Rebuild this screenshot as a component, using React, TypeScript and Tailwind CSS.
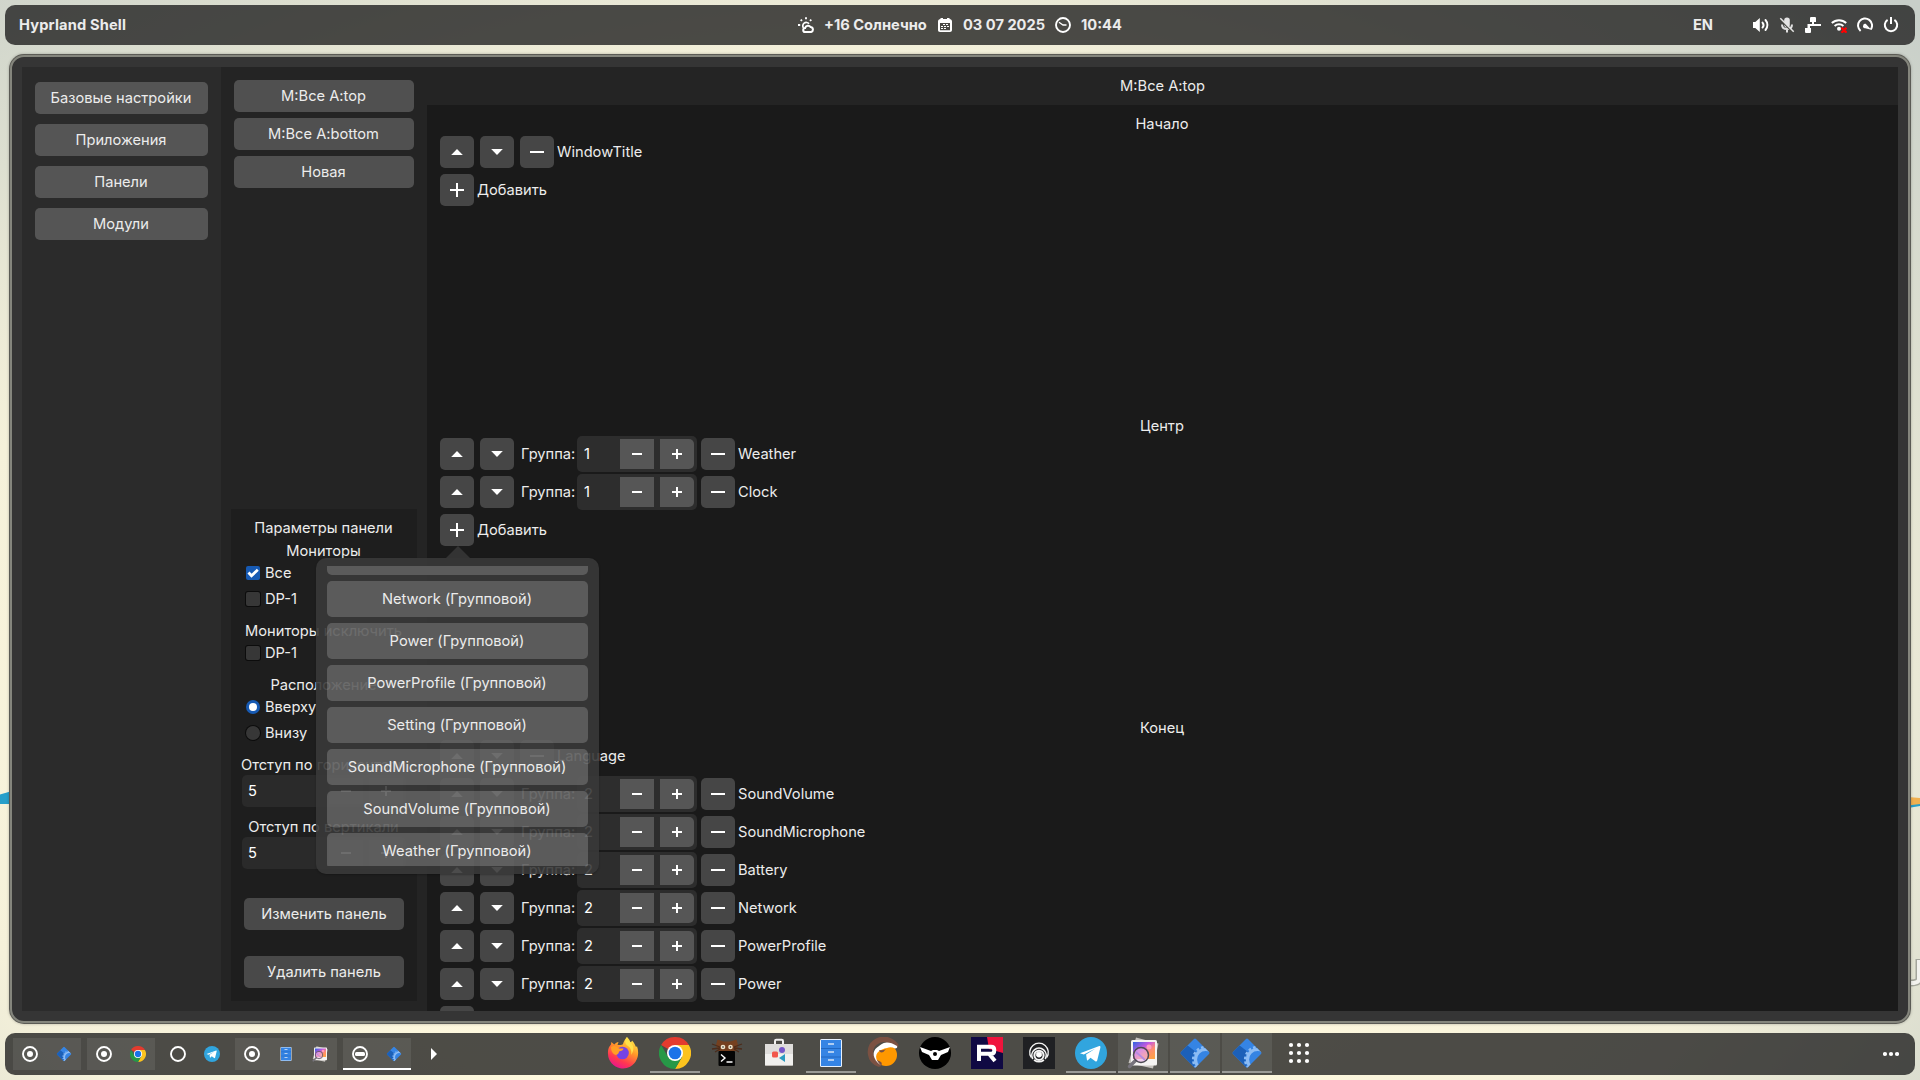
import React from "react";

type Kids = { children?: React.ReactNode };

/* ---------- symbolic icons ---------- */

const Up = () => (
  <svg width="16" height="16" viewBox="0 0 16 16" fill="#fff"><path d="M2.200 11 8 5l5.800 6z" /></svg>
);
const Down = () => (
  <svg width="16" height="16" viewBox="0 0 16 16" fill="#fff"><path d="M2.200 5h11.600L8 11z" /></svg>
);
const Minus = () => (
  <svg width="16" height="16" viewBox="0 0 16 16" fill="#fff"><path d="M1 7h14v2H1z" /></svg>
);
const Plus = () => (
  <svg width="16" height="16" viewBox="0 0 16 16" fill="#fff"><path d="M1 7h6V1h2v6h6v2H9v6H7V9H1z" /></svg>
);
const SmallMinus = () => (
  <svg width="16" height="16" viewBox="0 0 16 16" fill="#fff"><path d="M3 7h10v2H3z" /></svg>
);
const SmallPlus = () => (
  <svg width="16" height="16" viewBox="0 0 16 16" fill="#fff"><path d="M3 7h4V3h2v4h4v2H9v4H7V9H3z" /></svg>
);

const WeatherIcon = () => (
  <svg width="16" height="16" viewBox="0 0 16 16" fill="none" stroke="#fff" strokeWidth="1.500">
    <path d="M8 .2v2M2.700 2.600l1.300 1.300M0 8h2.200M13.300 2.600 12 3.900" strokeWidth="1.900" />
    <path d="M5.500 11A3.300 3.300 0 1 1 11 6.800" strokeWidth="1.700" />
    <path d="M7.300 15a2 2 0 0 1-.2-4 3 3 0 0 1 5.500-.9 2.500 2.500 0 0 1 .5 4.900z" strokeWidth="2" />
  </svg>
);
const CalendarIcon = () => (
  <svg width="16" height="16" viewBox="0 0 16 16">
    <path fill="#fff" fillRule="evenodd" d="M3.500 1H6v1h4V1h2.500v1c1.500 0 2.500 1 2.500 2.400V13c0 1.300-.8 2-2 2H3c-1.300 0-2-.8-2-2V4.400C1 3 2 2 3.500 2zM3 6v7.200h10V6z" />
    <path stroke="#fff" strokeWidth="1" strokeDasharray="2 1" d="M6 7.500h6M4 9.500h8M4 11.500h6" />
  </svg>
);
const ClockIcon = () => (
  <svg width="16" height="16" viewBox="0 0 16 16" fill="none" stroke="#fff">
    <circle cx="8" cy="8" r="7" strokeWidth="1.900" />
    <path d="M4 5.300 8 8h3.500" strokeWidth="1.300" />
  </svg>
);
const VolumeIcon = () => (
  <svg width="16" height="16" viewBox="0 0 16 16" fill="none" stroke="#fff" strokeWidth="1.900" strokeLinecap="round">
    <path d="M0 5h2.300L6.800 1v14l-4.500-4H0z" fill="#fff" stroke="none" />
    <path d="M9.500 5.500a3.800 3.800 0 0 1 0 5M12.500 3a7.500 7.500 0 0 1 0 10" />
  </svg>
);
const MicOffIcon = () => (
  <svg width="16" height="16" viewBox="0 0 16 16" fill="none">
    <rect x="5.200" y=".5" width="5.600" height="10" rx="2.800" fill="#e4e4e4" />
    <path d="M3 7.500c0 3 2.100 4.600 5 4.600s5-1.600 5-4.600M8 12v3.500" stroke="#e0e0e0" strokeWidth="2" />
    <path d="M1 2.500 13.500 15" stroke="#45463f" strokeWidth="1.600" />
    <path d="M1.300 1.300 14.700 14.700" stroke="#e4e4e4" strokeWidth="1.500" />
  </svg>
);
const NetIcon = () => (
  <svg width="16" height="16" viewBox="0 0 16 16" fill="#fff">
    <path d="M5 1.200Q5 0 6 0h4q1 0 1 1.200V5H9v2h7v2H5v2h1v3.700Q6 16 5 16H1q-1 0-1-1.300V11h2.500V7H7V5H5z" />
  </svg>
);
const WifiIcon = () => (
  <svg width="16" height="16" viewBox="0 0 16 16" fill="none" stroke="#fff" strokeWidth="2">
    <path d="M.8 6a10.500 10.500 0 0 1 14.400 0M3.600 8.900a6.500 6.500 0 0 1 8.800 0" />
    <circle cx="8" cy="11.800" r="2" fill="#fff" stroke="none" />
    <path d="m10.500 10.700 5 5m0-5-5 5" stroke="#f00" strokeWidth="2.300" />
  </svg>
);
const GaugeIcon = () => (
  <svg width="16" height="16" viewBox="0 0 16 16" fill="none" stroke="#fff" strokeWidth="2">
    <path d="M3.600 13.900A7 7 0 1 1 13.800 12.500" />
    <path d="M6.200 8.500a1.800 1.800 0 0 1 2.500-1.700l5.500 6-6-1.500a1.900 1.900 0 0 1-2-2.800z" fill="#fff" stroke="none" />
  </svg>
);
const PowerIcon = () => (
  <svg width="16" height="16" viewBox="0 0 16 16" fill="none" stroke="#fff" strokeWidth="2">
    <path d="M4.600 2.800a6.200 6.200 0 1 0 6.800 0M8 0v7" />
  </svg>
);

/* ---------- application icons ---------- */

type IconProps = { s: number };

const Chrome = ({ s }: IconProps) => (
  <svg width={s} height={s} viewBox="0 0 32 32">
    <path fill="#e33b2e" d="M16 16 2.140 8a16 16 0 0 1 27.720 0z" />
    <path fill="#fcc31e" d="M16 8h13.860A16 16 0 0 1 16 32l7-12z" />
    <path fill="#279847" d="M2.140 8A16 16 0 0 0 16 32l6.930-12L16 22l-6.930-2z" />
    <circle cx="16" cy="16" r="8" fill="#fff" />
    <circle cx="16" cy="16" r="6.300" fill="#1a73e8" />
  </svg>
);
const Telegram = ({ s }: IconProps) => (
  <svg width={s} height={s} viewBox="0 0 32 32">
    <circle cx="16" cy="16" r="16" fill="#31a5de" />
    <path fill="#fff" d="M5 16.200 24.300 9q1.300-.3 1.100 1.400L22.200 23.500q-.6 1.500-1.900.7L15.500 20.700l-2.600 2.500q-.8.700-1-.4l-.8-5.200 9.400-6.200-11.700 6z" />
  </svg>
);
const Gear = ({ s }: IconProps) => (
  <svg width={s} height={s} viewBox="0 0 32 32">
    <clipPath id="gearDiamond"><path d="M15 2q1-1 2 0l13 13q1 1 0 2L17 30q-1 1-2 0L2 17q-1-1 0-2z" /></clipPath>
    <g clipPath="url(#gearDiamond)">
      <path fill="#3584e4" d="M0 0h32v32H0z" />
      <path fill="#1c60b8" d="m8 8 9 7-3 5 2 12L0 16z" />
      <circle cx="26.500" cy="22.500" r="10" fill="none" stroke="#8cbcf4" strokeWidth="3.200" />
      <circle cx="26.500" cy="22.500" r="12.300" fill="none" stroke="#8cbcf4" strokeWidth="2.600" strokeDasharray="2.600 2.230" />
    </g>
  </svg>
);
const Files = ({ s }: IconProps) => (
  <svg width={s} height={s} viewBox="0 0 32 32">
    <rect x="5" y="2" width="22" height="28" rx="1.500" fill="#e8f1fc" />
    <path fill="#3584e4" d="M6 3h20v26H6z" />
    <path stroke="#1c60b8" strokeWidth=".8" d="M6 11.500h20M6 20h20" />
    <path stroke="#d6e4f5" strokeWidth="1.600" d="M13 7h6M13 15h6M13 23h6" />
  </svg>
);
const Viewer = ({ s }: IconProps) => (
  <svg width={s} height={s} viewBox="0 0 32 32">
    <defs>
      <linearGradient id="photo" x1="0" y1="0" x2="1" y2="1">
        <stop offset="0" stopColor="#2e63e0" /><stop offset=".4" stopColor="#c45ae0" /><stop offset=".65" stopColor="#ff8d70" /><stop offset="1" stopColor="#ffa53a" />
      </linearGradient>
    </defs>
    <path fill="#c5c2bd" d="m9 .5 22.500 6L26 31.500 1.500 26z" />
    <rect x="4" y="3" width="26" height="25.500" rx="1.500" fill="#f5f4f2" />
    <path fill="url(#photo)" d="M6 5h22v17H6z" />
    <circle cx="22" cy="10" r="2.500" fill="#ff9fbd" />
    <path d="m8.500 23.500-6 6" stroke="#77747c" strokeWidth="3.500" strokeLinecap="round" />
    <circle cx="14" cy="18" r="7.500" fill="#e9b4e6" fillOpacity=".6" stroke="#4c4a52" strokeWidth="1.500" />
    <path d="m9 15 9 8" stroke="#b58be0" strokeWidth="1.800" />
  </svg>
);
const Firefox = () => (
  <svg width="32" height="32" viewBox="0 0 32 32">
    <defs>
      <linearGradient id="fox" x1=".8" y1="0" x2=".3" y2="1">
        <stop offset="0" stopColor="#fff44f" /><stop offset=".4" stopColor="#ff9a28" /><stop offset=".75" stopColor="#ff3750" /><stop offset="1" stopColor="#e8158f" />
      </linearGradient>
    </defs>
    <path fill="url(#fox)" d="M20 0c2 2 3 3.500 3.300 5.300C25 4.500 25 4 25 3.500c2 2 3.200 4.500 4 6.500l1-.7c1.500 4 1.600 9-.2 13A15 15 0 0 1 1 17C.6 12.500 2 9.500 4 7.500L4.300 5l3 2.500c1.300-1.800 2.700-2.300 4.200-2.500L10.500 8c2 0 5 .3 5.500-1 .6-2 2-5 4-7z" />
    <circle cx="15.500" cy="16" r="6.300" fill="#7542e5" />
    <path fill="#ff9f24" d="M4 10c3-1.800 6-.8 8 1.500h4.500c0 1.500-2 2.500-4.500 3 0 2-1.300 3-3 3.500C5 17 4 13 4 10z" />
    <path fill="#ffe04a" d="M20 0c-3 4-2 7 1 9s4 6 3 9c3-4 3-8 1-11s-5-4-5-7z" />
  </svg>
);
const Kitty = () => (
  <svg width="32" height="32" viewBox="0 0 32 32">
    <path fill="#75401f" d="m6.500 2.500 6 2h7l6-2L27 8l-1.500 6H7L5 8z" />
    <path stroke="#4c2c1b" strokeWidth="1.300" d="m1 7 8 3M1 12l8-1M4 15l5-3M31 7l-8 3m8 2-8-1m5 4-5-3" />
    <circle cx="12" cy="10" r="2.300" fill="#f0e6cd" /><circle cx="19.500" cy="10" r="2.300" fill="#f0e6cd" />
    <circle cx="12" cy="10" r=".8" fill="#222" /><circle cx="19.500" cy="10" r=".8" fill="#222" />
    <rect x="7.500" y="14" width="16.500" height="15" rx="1" fill="#050505" />
    <path d="m10 17.500 4 3.500-4 3.500M15.500 25h6" fill="none" stroke="#fff" strokeWidth="1.400" />
  </svg>
);
const Store = () => (
  <svg width="32" height="32" viewBox="0 0 32 32">
    <path d="M12 8V4q0-1.300 1.300-1.300h5.400Q20 2.700 20 4v4" fill="none" stroke="#f1f0ee" strokeWidth="2" />
    <rect x="2" y="7" width="28" height="22" rx="1.500" fill="#f1f0ee" />
    <path d="M2 7h28v10H2z" fill="#dfdddb" />
    <rect x="9" y="14.500" width="6" height="6" rx="1.500" fill="#f2574c" />
    <circle cx="19" cy="13" r="3" fill="#7656c8" />
    <path d="m16 21 6-4v8z" fill="#2b9bc0" />
    <path d="M3 28.500h26" stroke="#bdb9b4" />
  </svg>
);
const Lutris = () => (
  <svg width="32" height="32" viewBox="0 0 32 32">
    <circle cx="19" cy="18" r="11" fill="#ff9800" />
    <path d="M12 27C2 24 1 11 8 5.500S23 2 28.500 8" fill="none" stroke="#7b5142" strokeWidth="5.500" strokeLinecap="round" />
    <path d="M14 28.500C5 22 5 14 10 10.500q4-3 4-3Q20 3 30 9q1 2-2 2.500-4-2-8-.5-2 0-6 2C8 16 7 22 14 28.500z" fill="#fff" />
    <path d="M12 13q4 1 7-1-3 4.500-6 3z" fill="#7b5142" />
  </svg>
);
const Winged = () => (
  <svg width="32" height="32" viewBox="0 0 32 32">
    <circle cx="16" cy="16" r="16" fill="#000" />
    <path fill="#fff" d="m1 10 11 4 2-1h4l2 1 11-4-2 5-7 3-3 5h-6l-3-5-7-3z" />
    <circle cx="16" cy="17" r="2" fill="#000" />
  </svg>
);
const Rustdesk = () => (
  <svg width="32" height="32" viewBox="0 0 32 32">
    <path fill="#100943" d="M0 0h32v32H0z" /><path fill="#f0143c" d="M16 0h16v16l-14-4z" />
    <path fill="none" stroke="#fff" strokeWidth="4" d="M8 24V9.800h12q3.300 0 3.300 3.400 0 3.600-3.300 3.600H10m8 0 6 7.200" />
  </svg>
);
const Rings = () => (
  <svg width="32" height="32" viewBox="0 0 32 32" fill="none" stroke="#f4f4f4">
    <path fill="#1f2023" stroke="none" d="M0 0h32v32H0z" />
    <path d="M8.200 20.500a9.300 9.300 0 1 1 15.600 0" strokeWidth="1.300" />
    <path d="M9.800 22a7.200 7.200 0 1 1 12.400 0" strokeWidth="1.600" />
    <circle cx="16" cy="18.300" r="4.600" strokeWidth="2" />
    <circle cx="16" cy="17.500" r="2.600" fill="#fff" />
    <path d="M11 23q5 3.500 10 0" strokeWidth="1.600" />
  </svg>
);
const Grid = () => (
  <svg width="32" height="32" viewBox="0 0 32 32" fill="#fff">
    {[8, 16, 24].map((y) => [8, 16, 24].map((x) => <circle key={`${x}-${y}`} cx={x} cy={y} r="2.100" />))}
  </svg>
);
const Ring = ({ kind }: { kind: "dot" | "empty" | "bar" }) => (
  <svg width="16" height="16" viewBox="0 0 16 16">
    <circle cx="8" cy="8" r="7" fill="none" stroke="#fff" strokeWidth="1.900" />
    {kind === "dot" && <circle cx="8" cy="8" r="3" fill="#fff" />}
    {kind === "bar" && <rect x="3" y="6" width="10" height="4" rx="1.500" fill="#fff" />}
  </svg>
);

/* ---------- building blocks ---------- */

const SquareButton = ({ children }: Kids) => (
  <button className="flex h-8 w-[34px] shrink-0 items-center justify-center rounded-[5px] bg-[#464646]">{children}</button>
);

const ModuleRow = ({ name, group }: { name: string; group?: number }) => (
  <div className="flex h-[38px] shrink-0 items-center pl-[3px]">
    <div className="flex gap-1.5">
      <SquareButton><Up /></SquareButton>
      <SquareButton><Down /></SquareButton>
      {group === undefined && <SquareButton><Minus /></SquareButton>}
    </div>
    {group !== undefined && (
      <>
        <span className="ml-[7px] w-14">Группа:</span>
        <div className="mr-1 flex h-9 w-[120px] items-center rounded-[5px] bg-[#2d2d2d] pr-[3px] pl-[7px]">
          <span className="flex-1 text-white">{group}</span>
          <button className="flex h-[30px] w-[34px] items-center justify-center bg-[#565656]"><SmallMinus /></button>
          <button className="ml-1.5 flex h-[30px] w-[34px] items-center justify-center rounded-r-[5px] bg-[#565656]"><SmallPlus /></button>
        </div>
        <SquareButton><Minus /></SquareButton>
      </>
    )}
    <span className="ml-[3px]">{name}</span>
  </div>
);

const AddRow = ({ children }: Kids) => (
  <div className="relative flex h-[38px] shrink-0 items-center gap-[3px] pl-[3px]">
    <SquareButton><Plus /></SquareButton>
    <span>Добавить</span>
    {children}
  </div>
);

const Section = ({ title, children }: Kids & { title: string }) => (
  <section className="flex h-[302px] shrink-0 flex-col">
    <h3 className="h-[18px] pr-px text-center leading-[18px]">{title}</h3>
    {children}
  </section>
);

const popoverItems = ["Network", "Power", "PowerProfile", "Setting", "SoundMicrophone", "SoundVolume", "Weather"];

const Popover = () => (
  <div className="absolute top-[35px] left-[-121px] z-10 w-[283px]">
    <svg className="mx-auto block" width="24" height="12" viewBox="0 0 24 12"><path d="M0 12 12 0l12 12z" fill="#353535" fillOpacity=".95" /></svg>
    <div className="h-[316px] rounded-[10px] bg-[#383838]/90 px-[11px] py-2 shadow-[0_1px_2px_rgba(0,0,0,0.25)]">
      <div className="flex h-[300px] flex-col gap-1.5 overflow-hidden">
        <div className="h-[9px] shrink-0 rounded-b-[5px] bg-white/19" />
        {popoverItems.map((n) => (
          <button key={n} className="h-9 shrink-0 rounded-[5px] bg-white/19 pr-px">{n} (Групповой)</button>
        ))}
      </div>
    </div>
  </div>
);

const Check = ({ label, checked, round }: { label: string; checked?: boolean; round?: boolean }) => (
  <label className="flex h-[26px] items-center gap-[5px] pl-[15px]">
    <span
      className={
        "flex size-[14px] items-center justify-center " +
        (round ? "rounded-full " : "rounded-[2px] ") +
        (checked ? "bg-[#175ab3]" : "bg-[#373737] shadow-[0_0_0_1px_#0c0c0c]")
      }
    >
      {checked && round && <span className="size-2 rounded-full bg-white" />}
      {checked && !round && (
        <svg width="14" height="14" viewBox="0 0 14 14"><path d="m2.500 6.500 3 3.300 6.300-6" fill="none" stroke="#fff" strokeWidth="2.800" /></svg>
      )}
    </span>
    {label}
  </label>
);

const WideSpin = () => (
  <div className="mx-[11px] mt-px flex h-8 shrink-0 items-center rounded-[5px] bg-[#2a2a2a] pr-[3px] pl-1.5">
    <span className="flex-1 text-white">5</span>
    <span className="flex h-[26px] w-[34px] items-center justify-center bg-[#333]"><SmallMinus /></span>
    <span className="ml-1.5 flex h-[26px] w-[34px] items-center justify-center bg-[#333]"><SmallPlus /></span>
  </div>
);

const Line = ({ children }: Kids) => (
  <div className="h-[18px] pr-px text-center leading-[18px] whitespace-nowrap">{children}</div>
);

const Params = () => (
  <div className="mx-2.5 mb-2.5 flex h-[492px] flex-col bg-[#1e1e1e] pt-2.5">
    <Line>Параметры панели</Line>
    <div className="mt-[5px]"><Line>Мониторы</Line></div>
    <Check label="Все" checked />
    <Check label="DP-1" />
    <div className="mt-[10px]"><Line>Мониторы исключить</Line></div>
    <Check label="DP-1" />
    <div className="mt-[10px]"><Line>Расположение</Line></div>
    <Check label="Вверху" checked round />
    <Check label="Внизу" round />
    <div className="mt-[10px]"><Line>Отступ по горизонтали</Line></div>
    <WideSpin />
    <div className="mt-[11px]"><Line>Отступ по вертикали</Line></div>
    <WideSpin />
    <button className="mx-[13px] mt-[29px] h-8 shrink-0 rounded-[5px] bg-[#494949]">Изменить панель</button>
    <button className="mx-[13px] mt-[26px] h-8 shrink-0 rounded-[5px] bg-[#494949]">Удалить панель</button>
  </div>
);

/* ---------- bars ---------- */

const barTone = "bg-[rgba(32,32,32,0.8)]";

const TopBar = () => (
  <header className={`mx-[5px] mt-[5px] grid h-10 shrink-0 grid-cols-3 items-center rounded-[10px] text-[14.67px] font-bold ${barTone}`}>
    <span className="pl-[14px] tracking-[0.14px]">Hyprland Shell</span>
    <div className="flex items-center justify-center whitespace-nowrap">
      <WeatherIcon />
      <span className="ml-2.5 w-[103px]">+16 Солнечно</span>
      <span className="ml-2.5"><CalendarIcon /></span>
      <span className="ml-2.5 w-[82px]">03 07 2025</span>
      <span className="ml-2.5"><ClockIcon /></span>
      <span className="ml-2.5 w-[41px]">10:44</span>
    </div>
    <div className="flex items-center justify-end gap-2.5 pr-4">
      <span className="mr-[30px]">EN</span>
      <VolumeIcon /><MicOffIcon /><NetIcon /><WifiIcon /><GaugeIcon /><PowerIcon />
    </div>
  </header>
);

const Workspace = ({ items, tone }: { items: React.ReactNode[]; tone: string }) => (
  <div className={`flex h-8 ${tone}`}>
    {items.map((it, i) => <span key={i} className="flex w-[34px] items-center justify-center">{it}</span>)}
  </div>
);

const dock: { icon: React.ReactNode; run?: boolean; lit?: boolean }[] = [
  { icon: <Firefox /> },
  { icon: <Chrome s={32} />, run: true },
  { icon: <Kitty /> },
  { icon: <Store /> },
  { icon: <Files s={32} />, run: true },
  { icon: <Lutris /> },
  { icon: <Winged /> },
  { icon: <Rustdesk /> },
  { icon: <Rings /> },
  { icon: <Telegram s={32} />, run: true },
  { icon: <Viewer s={32} />, run: true, lit: true },
  { icon: <Gear s={32} />, run: true, lit: true },
  { icon: <Gear s={32} />, run: true, lit: true },
  { icon: <Grid /> },
];

const BottomBar = () => (
  <footer className={`mx-[5px] mt-2.5 flex h-[42px] shrink-0 rounded-[10px] ${barTone}`}>
    <div className="flex w-[593px] items-center gap-1.5 pl-2">
      <Workspace tone="bg-white/8" items={[<Ring kind="dot" />, <Gear s={16} />]} />
      <Workspace tone="bg-white/8" items={[<Ring kind="dot" />, <Chrome s={16} />]} />
      <Workspace tone="" items={[<Ring kind="empty" />, <Telegram s={16} />]} />
      <Workspace tone="bg-white/8" items={[<Ring kind="dot" />, <Files s={16} />, <Viewer s={16} />]} />
      <Workspace tone="bg-white/8 shadow-[inset_0_-2px_0_#fff]" items={[<Ring kind="bar" />, <Gear s={16} />]} />
      <span className="ml-[9px]">
        <svg width="16" height="16" viewBox="0 0 16 16" fill="#fff"><path d="m5 2 6 6-6 6z" /></svg>
      </span>
    </div>
    <div className="flex h-10 gap-0.5">
      {dock.map((d, i) => (
        <span
          key={i}
          className={
            "flex w-[50px] items-center justify-center " +
            (d.run ? "border-b-2 border-[#9b9b97] pt-0.5 " : "") +
            (d.lit ? "bg-white/8" : "")
          }
        >
          {d.icon}
        </span>
      ))}
    </div>
    <div className="flex flex-1 items-center justify-end pr-4">
      <svg width="16" height="16" viewBox="0 0 16 16" fill="#fff"><circle cx="2" cy="8" r="2.100" /><circle cx="8" cy="8" r="2.100" /><circle cx="14" cy="8" r="2.100" /></svg>
    </div>
  </footer>
);

const Wallpaper = () => (
  <div className="absolute inset-0 -z-10 bg-[radial-gradient(ellipse_66%_80%_at_45%_65%,#fff9de_0%,#fff9de_45%,#f5f1da_74%,#dddfd0_92%,#c8cfc9_115%)]">
    <svg className="absolute top-[790px] left-0" width="12" height="15" viewBox="0 0 12 15"><path d="M0 4.500 12 1v13H0z" fill="#279fca" /></svg>
    <svg className="absolute top-[796px] right-0" width="12" height="14" viewBox="0 0 12 14"><path d="M0 1 12 2v7L0 11z" fill="#f0b050" /><path d="m0 9.500 12-1.500v2L0 12z" fill="#279fca" /></svg>
    <svg className="absolute top-[956px] right-0" width="12" height="32" viewBox="0 0 12 32" fill="none">
      <path d="M11 3v20q0 4-8 4" stroke="#a4a69c" strokeWidth="7" />
      <path d="M11 4v19q0 4-8 4" stroke="#f2f2ee" strokeWidth="4" />
    </svg>
  </div>
);

/* ---------- page ---------- */

const navButtons = ["Базовые настройки", "Приложения", "Панели", "Модули"];
const panelButtons = ["M:Все A:top", "M:Все A:bottom", "Новая"];
const endModules = ["SoundVolume", "SoundMicrophone", "Battery", "Network", "PowerProfile", "Power"];

export default function App() {
  return (
    <div className="relative isolate flex h-[1080px] w-[1920px] flex-col overflow-hidden font-['Inter',sans-serif] text-[14.67px] leading-[18px] text-[#ececec]">
      <Wallpaper />
      <TopBar />
      <main className="mx-2.5 mt-2.5 flex h-[968px] shrink-0 rounded-[14px] border-2 border-[#85867d] bg-[#353535] p-2.5 shadow-[0_0_0_1px_#5b5b55,0_0_3px_1px_rgba(0,0,0,0.25)]">
        <nav className="flex w-[199px] flex-col gap-2.5 bg-[#2b2b2b] px-[13px] pt-[15px]">
          {navButtons.map((n) => <button key={n} className="h-8 rounded-[5px] bg-[#555] pr-px">{n}</button>)}
        </nav>
        <aside className="flex w-[206px] flex-col justify-between bg-[#242424]">
          <div className="flex flex-col gap-1.5 px-[13px] pt-[13px]">
            {panelButtons.map((n) => <button key={n} className="h-8 rounded-[5px] bg-[#505050] pr-px">{n}</button>)}
          </div>
          <Params />
        </aside>
        <div className="flex flex-1 flex-col">
          <h2 className="h-[38px] shrink-0 bg-[#242424] text-center leading-[38px]">M:Все A:top</h2>
          <div className="relative flex h-[906px] flex-col bg-[#1a1a1a] p-2.5 [clip-path:inset(0_0_0_-200px)]">
            <Section title="Начало">
              <ModuleRow name="WindowTitle" />
              <AddRow />
            </Section>
            <Section title="Центр">
              <ModuleRow name="Weather" group={1} />
              <ModuleRow name="Clock" group={1} />
              <AddRow><Popover /></AddRow>
            </Section>
            <Section title="Конец">
              <ModuleRow name="Language" />
              {endModules.map((n) => <ModuleRow key={n} name={n} group={2} />)}
              <AddRow />
            </Section>
          </div>
        </div>
      </main>
      <BottomBar />
    </div>
  );
}
